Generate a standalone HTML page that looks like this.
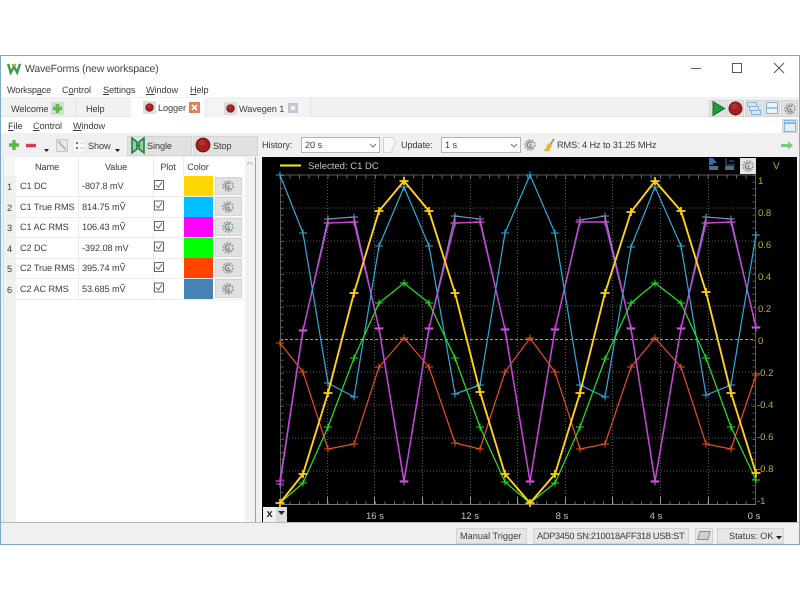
<!DOCTYPE html>
<html><head><meta charset="utf-8"><style>
html,body{margin:0;padding:0;width:800px;height:600px;overflow:hidden;background:#fff}
body{position:relative;font:9.2px "Liberation Sans",sans-serif;letter-spacing:-.1px;color:#3c3c3c;text-rendering:geometricPrecision}
.a{position:absolute;white-space:nowrap}
.t{position:absolute;white-space:nowrap;line-height:12px;height:12px}
.c{transform:translateX(-50%)}
.b{position:absolute;background:#e1e1e1;border:1px solid #d4d4d4;box-sizing:border-box}
u{text-decoration:underline}
svg{position:absolute;overflow:visible}
</style></head><body>
<svg width="0" height="0" style="left:0;top:0"><defs>
<symbol id="g" viewBox="0 0 14 14"><circle cx="7" cy="7" r="5" fill="#dcdcdc" stroke="#9aa0a0" stroke-width="1.6" stroke-dasharray="2 1.1"/><path d="M9 4.500A3 3 0 1 0 9.500 9" fill="none" stroke="#6d7d80" stroke-width="1.3"/><circle cx="7.400" cy="7.400" r="1.100" fill="#708088"/></symbol>
<symbol id="rec" viewBox="0 0 14 14"><circle cx="7" cy="7" r="6" fill="#a31f1f" stroke="#6d1a1a"/><circle cx="6" cy="5" r="2.500" fill="#c84040" opacity=".6"/></symbol>
</defs></svg>

<!-- window frame -->
<div class="a" style="left:0;top:55px;width:800px;height:490px;box-sizing:border-box;border:1px solid #7fa9c9;background:#fff"></div>

<!-- title bar -->
<svg style="left:7px;top:63px" width="14" height="11" viewBox="0 0 15 12"><path d="M1 1L4 10.500L7.500 4L11 10.500L14 1" fill="none" stroke="#3d9a4c" stroke-width="2.600"/><path d="M5.500 1L7.500 4L9.500 1" fill="none" stroke="#9b8a2a" stroke-width="1.300"/></svg>
<div class="t" style="left:25px;top:63px;font-size:10.500px;letter-spacing:-.2px;color:#444;line-height:13px">WaveForms (new workspace)</div>
<svg style="left:690px;top:60px" width="100" height="20"><path d="M1 8.500H11" stroke="#666" stroke-width="1"/><rect x="42.500" y="3.500" width="9" height="9" fill="none" stroke="#555"/><path d="M84 3l10 10M94 3L84 13" stroke="#555" fill="none"/></svg>

<!-- menu -->
<div class="t" style="left:7px;top:84px;letter-spacing:-.2px">Worksp<u>a</u>ce</div>
<div class="t" style="left:62px;top:84px">C<u>o</u>ntrol</div>
<div class="t" style="left:103px;top:84px"><u>S</u>ettings</div>
<div class="t" style="left:146px;top:84px"><u>W</u>indow</div>
<div class="t" style="left:190px;top:84px"><u>H</u>elp</div>

<!-- tab bar -->
<div class="a" style="left:1px;top:97px;width:798px;height:20px;background:#f1f1f1;border-bottom:1px solid #e6e6e6;box-sizing:border-box"></div>
<div class="a" style="left:75px;top:98px;width:1px;height:18px;background:#e4e4e4"></div>
<div class="a" style="left:131px;top:98px;width:73px;height:20px;background:#fff"></div>
<div class="a" style="left:209px;top:98px;width:102px;height:19px;background:#f4f4f4;border-right:1px solid #e2e2e2;box-sizing:border-box"></div>
<div class="t" style="left:11px;top:103px;">Welcome</div>
<div class="a" style="left:51px;top:102px;width:13px;height:13px;background:#cfe0cf"></div>
<svg style="left:52px;top:103px" width="11" height="11"><path d="M5.500 1v9M1 5.500h9" stroke="#62b84a" stroke-width="3.600"/></svg>
<div class="t" style="left:86px;top:103px">Help</div>
<div class="a" style="left:143px;top:101px;width:13px;height:13px;background:#ddd"></div>
<svg style="left:145px;top:103px" width="9" height="9"><use href="#rec" width="9" height="9"/></svg>
<div class="t" style="left:158px;top:102px">Logger</div>
<div class="a" style="left:189px;top:102px;width:11px;height:11px;background:#ea7d50"></div>
<svg style="left:189px;top:102px" width="11" height="11"><path d="M3 3l5 5M8 3l-5 5" stroke="#fff" stroke-width="1.600"/></svg>
<div class="a" style="left:224px;top:102px;width:13px;height:13px;background:#ddd"></div>
<svg style="left:226px;top:104px" width="9" height="9"><use href="#rec" width="9" height="9"/></svg>
<div class="t" style="left:239px;top:103px">Wavegen 1</div>
<div class="a" style="left:288px;top:103px;width:10px;height:10px;background:#c4c8cc"></div>
<svg style="left:288px;top:103px" width="10" height="10"><path d="M3 3l4 4M7 3l-4 4" stroke="#fff" stroke-width="1.400"/></svg>

<!-- right tab buttons -->
<div class="b" style="left:709px;top:100px;width:17px;height:17px"></div>
<svg style="left:712px;top:101px" width="13" height="15"><path d="M1 .5L12.500 7.500L1 14.500Z" fill="#1e9a3c" stroke="#176b2c"/></svg>
<div class="b" style="left:727px;top:100px;width:17px;height:17px"></div>
<svg style="left:728px;top:101px" width="15" height="15"><use href="#rec" width="15" height="15"/></svg>
<div class="b" style="left:745px;top:100px;width:17px;height:17px"></div>
<svg style="left:747px;top:102px" width="14" height="14"><g fill="#d8e6f5" stroke="#8ab4e0"><rect x=".5" y=".5" width="9" height="4"/><rect x="2.500" y="4.500" width="9" height="4"/><rect x="4.500" y="8.500" width="9" height="4"/></g></svg>
<div class="b" style="left:763px;top:100px;width:17px;height:17px"></div>
<svg style="left:766px;top:102px" width="12" height="13"><rect x=".5" y=".5" width="11" height="11" fill="#eef4fa" stroke="#8ab4e0"/><path d="M0 6h12" stroke="#8ab4e0" stroke-width="1.500"/></svg>
<div class="b" style="left:781px;top:100px;width:17px;height:17px"></div>
<svg style="left:783px;top:102px" width="14" height="14"><use href="#g" width="14" height="14"/></svg>

<!-- submenu -->
<div class="t" style="left:8px;top:120px"><u>F</u>ile</div>
<div class="t" style="left:33px;top:120px"><u>C</u>ontrol</div>
<div class="t" style="left:73px;top:120px"><u>W</u>indow</div>
<div class="b" style="left:782px;top:119px;width:16px;height:14px"></div>
<svg style="left:784px;top:120px" width="12" height="12"><rect x=".5" y=".5" width="11" height="11" fill="#e4eef8" stroke="#8ab4e0"/><path d="M0 3h12" stroke="#8ab4e0" stroke-width="2"/></svg>

<!-- toolbar -->
<div class="a" style="left:1px;top:133px;width:798px;height:24px;background:#f0f0f0"></div>
<svg style="left:8px;top:139px" width="12" height="12"><path d="M6 1v10M1 6h10" stroke="#5ab84a" stroke-width="3.400"/></svg>
<svg style="left:26px;top:143px" width="11" height="5"><path d="M0 2.500h10" stroke="#dc3a50" stroke-width="3.400"/></svg>
<svg style="left:43px;top:148px" width="7" height="5"><path d="M1 1h5l-2.500 3z" fill="#222"/></svg>
<svg style="left:56px;top:139px" width="12" height="13"><rect x=".5" y=".5" width="11" height="12" fill="#e6e6e6" stroke="#c8c8c8"/><path d="M2 2l8 9" stroke="#a8b4a0" stroke-width="1.500"/></svg>
<svg style="left:73px;top:139px" width="14" height="13"><rect x="0" y="0" width="13" height="13" fill="#fafafa" stroke="#e8e8e8"/><path d="M3 4h2M3 9h2" stroke="#3a80d0" stroke-width="2"/><path d="M7 4h5M7 9h5" stroke="#ccc"/></svg>
<div class="t" style="left:88px;top:140px">Show</div>
<svg style="left:114px;top:148px" width="7" height="5"><path d="M1 1h5l-2.500 3z" fill="#222"/></svg>

<div class="b" style="left:127px;top:136px;width:65px;height:20px"></div>
<svg style="left:131px;top:137px" width="14" height="17"><path d="M1 1v15M1 1l5 4v7l-5 4zM13 1v15M13 1l-5 4v7l5 4z" fill="#8fd0a0" stroke="#1c7a3a" stroke-width="1.500"/><path d="M5 8.500h4" stroke="#1c7a3a"/></svg>
<div class="t" style="left:147px;top:140px">Single</div>
<div class="b" style="left:193px;top:136px;width:65px;height:20px"></div>
<svg style="left:195px;top:137px" width="16" height="16"><use href="#rec" width="16" height="16"/></svg>
<div class="t" style="left:213px;top:140px">Stop</div>

<div class="t" style="left:262px;top:139px">History:</div>
<div class="a" style="left:301px;top:137px;width:79px;height:16px;background:#fff;border:1px solid #b4b4b4;box-sizing:border-box"></div>
<div class="t" style="left:305px;top:139px">20 s</div>
<svg style="left:369px;top:143px" width="8" height="5"><path d="M1 1l3 3 3-3" fill="none" stroke="#777"/></svg>
<svg style="left:383px;top:137px" width="14" height="16"><path d="M.5.500H9L13 5 8 15.500H.5Z" fill="#f8f8f8" stroke="#d4d4d4"/></svg>
<div class="t" style="left:401px;top:139px">Update:</div>
<div class="a" style="left:441px;top:137px;width:80px;height:16px;background:#fff;border:1px solid #b4b4b4;box-sizing:border-box"></div>
<div class="t" style="left:445px;top:139px">1 s</div>
<svg style="left:510px;top:143px" width="8" height="5"><path d="M1 1l3 3 3-3" fill="none" stroke="#777"/></svg>
<svg style="left:523px;top:138px" width="14" height="14"><use href="#g" width="14" height="14"/></svg>
<svg style="left:543px;top:138px" width="12" height="14"><path d="M11 1L7 7" stroke="#a8a060" stroke-width="2"/><path d="M5 5l4 3-3 5H0c2-1 3-3 5-8z" fill="#e4b830"/></svg>
<div class="t" style="left:557px;top:139px">RMS: 4 Hz to 31.25 MHz</div>
<svg style="left:781px;top:141px" width="12" height="9"><path d="M0 4.500h8" stroke="#7cc87c" stroke-width="3"/><path d="M7 .5l5 4-5 4z" fill="#7cc87c"/></svg>

<!-- left table -->
<div class="a" style="left:1px;top:157px;width:260px;height:366px;background:#f0f0f0"></div>
<div class="a" style="left:3px;top:157px;width:253px;height:365px;background:#fff;border-right:1px solid #a0a0a0;border-left:1px solid #d8e0e8;box-sizing:border-box"></div>
<div class="a" style="left:4px;top:176px;width:12px;height:346px;background:#f0f0f0"></div>
<div class="a" style="left:4px;top:157px;width:11px;height:19px;background:#f6f6f6"></div>
<div class="a" style="left:245px;top:157px;width:10px;height:365px;background:#f2f2f2"></div>
<svg style="left:246px;top:161px" width="8" height="5"><path d="M1 4l3-3 3 3" fill="none" stroke="#bbb"/></svg>
<div class="a" style="left:4px;top:299px;width:241px;height:1px;background:#ececec"></div>
<div class="a" style="left:78px;top:157px;width:1px;height:142px;background:#ececec"></div>
<div class="a" style="left:153px;top:157px;width:1px;height:142px;background:#ececec"></div>
<div class="a" style="left:183px;top:157px;width:1px;height:19px;background:#ececec"></div>
<div class="a" style="left:4px;top:196px;width:241px;height:1px;background:#ececec"></div>
<div class="a" style="left:4px;top:217px;width:241px;height:1px;background:#ececec"></div>
<div class="a" style="left:4px;top:237px;width:241px;height:1px;background:#ececec"></div>
<div class="a" style="left:4px;top:258px;width:241px;height:1px;background:#ececec"></div>
<div class="a" style="left:4px;top:278px;width:241px;height:1px;background:#ececec"></div>
<div class="t c" style="left:47px;top:161px">Name</div>
<div class="t c" style="left:116px;top:161px">Value</div>
<div class="t c" style="left:168px;top:161px">Plot</div>
<div class="t c" style="left:198px;top:161px">Color</div>

<div class="t" style="left:7px;top:181px">1</div><div class="t" style="left:20px;top:180px">C1 DC</div><div class="t" style="left:82px;top:180px">-807.8 mV</div>
<div class="t" style="left:7px;top:202px">2</div><div class="t" style="left:20px;top:201px">C1 True RMS</div><div class="t" style="left:82px;top:201px">814.75 mṼ</div>
<div class="t" style="left:7px;top:222px">3</div><div class="t" style="left:20px;top:221px">C1 AC RMS</div><div class="t" style="left:82px;top:221px">106.43 mṼ</div>
<div class="t" style="left:7px;top:243px">4</div><div class="t" style="left:20px;top:242px">C2 DC</div><div class="t" style="left:82px;top:242px">-392.08 mV</div>
<div class="t" style="left:7px;top:263px">5</div><div class="t" style="left:20px;top:262px">C2 True RMS</div><div class="t" style="left:82px;top:262px">395.74 mṼ</div>
<div class="t" style="left:7px;top:284px">6</div><div class="t" style="left:20px;top:283px">C2 AC RMS</div><div class="t" style="left:82px;top:283px">53.685 mṼ</div>

<svg style="left:154px;top:176px" width="10" height="122" fill="#fff" stroke="#666"><g id="k"><rect x=".5" y="4.500" width="9" height="9"/><path d="M2 9l2.500 2.500L8 6" fill="none"/></g><use href="#k" y="20.500"/><use href="#k" y="41"/><use href="#k" y="61.500"/><use href="#k" y="82"/><use href="#k" y="102.500"/></svg>

<div class="a" style="left:184px;top:176px;width:29px;height:20px;background:#ffd700"></div>
<div class="a" style="left:184px;top:197px;width:29px;height:20px;background:#00bfff"></div>
<div class="a" style="left:184px;top:217px;width:29px;height:20px;background:#ff00ff"></div>
<div class="a" style="left:184px;top:238px;width:29px;height:20px;background:#00ff00"></div>
<div class="a" style="left:184px;top:258px;width:29px;height:20px;background:#ff4500"></div>
<div class="a" style="left:184px;top:279px;width:29px;height:20px;background:#4682b4"></div>

<div class="b" style="left:215px;top:177px;width:27px;height:18px"></div><svg style="left:221px;top:179px" width="14" height="14"><use href="#g" width="14" height="14"/></svg>
<div class="b" style="left:215px;top:197px;width:27px;height:19px"></div><svg style="left:221px;top:200px" width="14" height="14"><use href="#g" width="14" height="14"/></svg>
<div class="b" style="left:215px;top:218px;width:27px;height:18px"></div><svg style="left:221px;top:220px" width="14" height="14"><use href="#g" width="14" height="14"/></svg>
<div class="b" style="left:215px;top:238px;width:27px;height:19px"></div><svg style="left:221px;top:241px" width="14" height="14"><use href="#g" width="14" height="14"/></svg>
<div class="b" style="left:215px;top:259px;width:27px;height:18px"></div><svg style="left:221px;top:261px" width="14" height="14"><use href="#g" width="14" height="14"/></svg>
<div class="b" style="left:215px;top:279px;width:27px;height:19px"></div><svg style="left:221px;top:282px" width="14" height="14"><use href="#g" width="14" height="14"/></svg>

<!-- plot -->
<div class="a" style="left:262px;top:157px;width:535px;height:365px;background:#000"></div>
<svg style="left:0;top:0" width="800" height="600" viewBox="0 0 800 600" font-family="Liberation Sans, sans-serif" font-size="9.500" letter-spacing="0">
<defs>
<marker id="my" markerUnits="userSpaceOnUse" markerWidth="10" markerHeight="10" refX="5" refY="5"><path d="M.5 5h9M5 1v8" stroke="#ffd400" stroke-width="1.700"/></marker>
<marker id="mc" markerUnits="userSpaceOnUse" markerWidth="10" markerHeight="10" refX="5" refY="5"><path d="M1 5h8M5 1.500v7" stroke="#2aaedc" stroke-width="1"/></marker>
<marker id="mm" markerUnits="userSpaceOnUse" markerWidth="10" markerHeight="10" refX="5" refY="5"><path d="M.5 5h9M5 1.500v7" stroke="#e23ce2" stroke-width="1.200"/></marker>
<marker id="mg" markerUnits="userSpaceOnUse" markerWidth="10" markerHeight="10" refX="5" refY="5"><path d="M1 5h8M5 1.500v7" stroke="#1ee81e" stroke-width="1"/></marker>
<marker id="mo" markerUnits="userSpaceOnUse" markerWidth="10" markerHeight="10" refX="5" refY="5"><path d="M1 5h8M5 1.500v7" stroke="#e85020" stroke-width="1"/></marker>
<marker id="ms" markerUnits="userSpaceOnUse" markerWidth="10" markerHeight="10" refX="5" refY="5"><path d="M1 5h8M5 1.500v7" stroke="#7a9ac0" stroke-width="1"/></marker>
</defs>
<!-- grid -->
<g stroke="#5a5a5a" stroke-width="1" stroke-dasharray="1 2" fill="none">
<path d="M280 208H755M280 241H755M280 273H755M280 306H755M280 372H755M280 405H755M280 438H755M280 471H755"/>
<path d="M327.500 175V504M374.500 175V504M422.500 175V504M470.500 175V504M517.500 175V504M565.500 175V504M612.500 175V504M660.500 175V504M708.500 175V504"/>
</g>
<path d="M280 339.500H755" stroke="#9a9a9a" stroke-dasharray="3 2" fill="none"/>
<!-- frame + ticks -->
<path d="M280.500 175V504M755.500 175V504M280 175H756" stroke="#5a5a5a" fill="none"/>
<path d="M280 504.500H756" stroke="#7a7a7a" fill="none"/>
<g stroke="#6a6a6a" stroke-dasharray="1 8.500" fill="none"><path d="M280 177H756" stroke-width="3"/><path d="M280 503H756" stroke-width="3"/></g>
<g stroke="#5a5a5a" stroke-dasharray="1 5.600" fill="none"><path d="M754 175V504" stroke-width="3"/><path d="M282 175V504" stroke-width="3"/></g>
<path d="M327.500 497V504M374.500 497V504M422.500 497V504M470.500 497V504M517.500 497V504M565.500 497V504M612.500 497V504M660.500 497V504M708.500 497V504" stroke="#999"/>
<!-- traces -->
<g fill="none" stroke-linejoin="miter">
<polyline stroke="#e85020" stroke-width="1.200" marker-mid="url(#mo)" marker-start="url(#mo)" marker-end="url(#mo)" points="280,343 303,372 328,449 354,444 379,367 404,338 429,367 455,443 480,449 505,372 530,338 555,372 580,449 605,444 631,367 655,338 681,367 706,444 731,449 756,375"/>
<polyline stroke="#6f93bd" stroke-width="1.200" marker-mid="url(#ms)" marker-start="url(#ms)" marker-end="url(#ms)" points="280,484 303,331 328,219 354,217 379,329 404,482 429,329 455,216 480,219 505,330 530,482 555,330 580,220 605,216 631,329 655,482 681,329 706,217 731,219 756,328"/>
<polyline stroke="#d040e0" stroke-width="1.400" marker-mid="url(#mm)" marker-start="url(#mm)" marker-end="url(#mm)" points="280,481 303,330 328,223 354,222 379,328 404,481 429,328 455,223 480,222 505,329 530,481 555,329 580,222 605,222 631,328 655,481 681,328 706,223 731,222 756,327"/>
<polyline stroke="#2aaedc" stroke-width="1.200" marker-mid="url(#mc)" marker-start="url(#mc)" marker-end="url(#mc)" points="280,175 303,233 328,383 354,397 379,246 404,187 429,246 455,394 480,385 505,233 530,175 555,233 580,385 605,397 631,247 655,187 681,246 706,395 731,385 756,235"/>
<polyline stroke="#1ee81e" stroke-width="1.200" marker-mid="url(#mg)" marker-start="url(#mg)" marker-end="url(#mg)" points="280,503 303,483 328,427 354,358 379,303 404,283 429,303 455,358 480,427 505,482 530,503 555,483 580,427 605,359 631,303 655,283 681,303 706,358 731,427 756,480"/>
<polyline stroke="#ffd21a" stroke-width="1.900" marker-mid="url(#my)" marker-start="url(#my)" marker-end="url(#my)" points="280,503 303,474 328,393 354,293 379,211 404,181 429,211 455,293 480,392 505,474 530,503 555,474 580,393 605,293 631,212 655,181 681,211 706,292 731,393 756,473"/>
</g>
<!-- legend -->
<path d="M280 165.500H301" stroke="#ffe81a" stroke-width="2"/>
<text x="308" y="169" fill="#c4c4c4">Selected: C1 DC</text>
<!-- y labels -->
<g fill="#c8ac20">
<text x="758" y="184">1</text><text x="758" y="216">0.8</text><text x="758" y="248">0.6</text><text x="758" y="280">0.4</text><text x="758" y="312">0.2</text><text x="758" y="344">0</text>
<text x="757" y="376">-0.2</text><text x="757" y="408">-0.4</text><text x="757" y="440">-0.6</text><text x="757" y="472">-0.8</text><text x="757" y="504">-1</text>
<text x="773" y="169" font-size="10">V</text>
</g>
<!-- x labels -->
<g fill="#c4c4c4" text-anchor="middle"><text x="375" y="519">16 s</text><text x="470" y="519">12 s</text><text x="562" y="519">8 s</text><text x="656" y="519">4 s</text><text x="754" y="519">0 s</text></g>
<!-- plot top icons -->
<path d="M709 158h4l4 5h-4v2h-4z" fill="#2c6ca8"/><path d="M709 166h9v4h-9z" fill="#5a6a78"/>
<path d="M726 158v7h9M729 161h5" stroke="#2c6ca8" fill="none"/><path d="M725 166h9v4h-9z" fill="#5a6a78"/>
<rect x="740" y="158" width="16" height="16" fill="#e4e4e4"/>
<use href="#g" x="741" y="159" width="14" height="14"/>
</svg>

<!-- x button -->
<div class="a" style="left:263px;top:507px;width:13px;height:15px;background:#f0f0f0;font:bold 11px/14px 'Liberation Sans',sans-serif;text-align:center;color:#222">x</div>
<div class="a" style="left:276px;top:507px;width:11px;height:15px;background:#dcdcdc"></div>
<svg style="left:277px;top:511px" width="9" height="5"><path d="M1 0h7l-3.500 4z" fill="#222"/></svg>

<!-- status bar -->
<div class="a" style="left:1px;top:522px;width:798px;height:1px;background:#b8b8b8"></div>
<div class="a" style="left:1px;top:523px;width:798px;height:21px;background:#f0f0f0"></div>
<div class="b" style="left:456px;top:528px;width:71px;height:16px;background:#e6e6e6"></div>
<div class="t" style="left:460px;top:530px;letter-spacing:0">Manual Trigger</div>
<div class="b" style="left:533px;top:528px;width:156px;height:16px;background:#e6e6e6"></div>
<div class="t" style="left:537px;top:530px;letter-spacing:-.3px">ADP3450 SN:210018AFF318 USB:ST</div>
<div class="b" style="left:695px;top:528px;width:18px;height:16px;background:#e6e6e6"></div>
<svg style="left:697px;top:531px" width="14" height="9"><path d="M3 .5h10l-2 8H.5z" fill="#d0d0d0" stroke="#8a8a8a"/></svg>
<div class="b" style="left:717px;top:528px;width:67px;height:16px;background:#e6e6e6"></div>
<div class="t" style="left:729px;top:530px;letter-spacing:0">Status: OK</div>
<svg style="left:776px;top:536px" width="6" height="4"><path d="M0 0h6l-3 3.500z" fill="#222"/></svg>
</body></html>
